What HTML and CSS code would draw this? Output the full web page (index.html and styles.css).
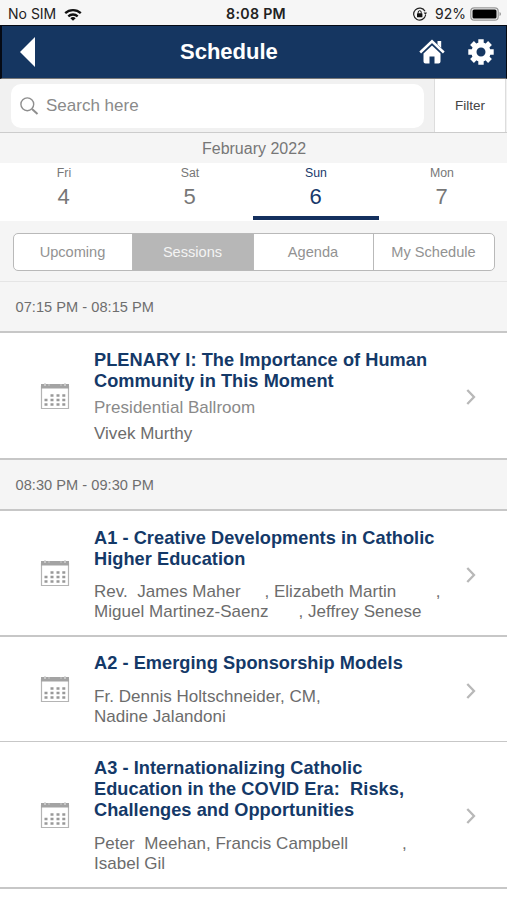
FILE: index.html
```html
<!DOCTYPE html>
<html lang="en">
<head>
<meta charset="utf-8">
<title>Schedule</title>
<link rel="stylesheet" href="styles.css">
</head>
<body>
<svg class="defs" aria-hidden="true">
  <symbol id="calendar" viewBox="0 0 30 28">
    <path d="M1.500 4v22.500h27V4" fill="#fff" stroke="#b4b4b4" stroke-width="1.200"/>
    <path d="M1 2h28v4.500H1z" fill="#a3a3a3"/>
    <path d="M5 1v3M9 2.500v1M21 2.500v1M25 1v3" stroke="#d5d5d5" stroke-width="1.500"/>
    <path d="M10.500 13.500h3M16.500 13.500h3M22.300 13.500h3M4.500 18h3M10.500 18h3M16.500 18h3M22.300 18h3M4.500 22.500h3M10.500 22.500h3M16.500 22.500h3M22.300 22.500h3" stroke="#999" stroke-width="2.700"/>
  </symbol>
  <symbol id="chevron" viewBox="0 0 10 16">
    <path d="M1.300 1l6.700 7-6.700 7" fill="none" stroke="#b8b8b8" stroke-width="2.300"/>
  </symbol>
</svg>

<div class="status">
  <div class="carrier">No SIM
    <svg width="18" height="13" viewBox="0 0 18 13" fill="none" stroke="#111" stroke-width="2.300"><path d="M1.200 5.200a11.300 11.300 0 0 1 15.600 0M4.300 8.300a7 7 0 0 1 9.400 0"/><path d="M6.300 10.200a4.300 4.300 0 0 1 5.400 0L9 12.800z" fill="#111" stroke="none"/></svg>
  </div>
  <div class="clock">8:08 PM</div>
  <div class="power">
    <svg width="14" height="14" viewBox="0 0 14 14"><path d="M12 4.300A6 6 0 1 0 12.600 8" fill="none" stroke="#222" stroke-width="1.200"/><path d="M10.600 5.500h3.400L12.500 8z" fill="#222"/><rect x="4" y="6.300" width="5.400" height="4" rx=".5" fill="#111"/><path d="M5.200 6.500V5.200a1.500 1.500 0 0 1 3 0v1.300" fill="none" stroke="#111"/></svg>
    <span class="percent">92%</span>
    <svg width="32" height="14" viewBox="0 0 32 14"><rect x=".8" y=".8" width="27.400" height="12.400" rx="3.500" fill="#f6f6f6" stroke="#999" stroke-width="1.200"/><rect x="2.500" y="2.500" width="24" height="9" rx="1.500"/><path d="M29.500 5v4q1.500-.5 1.500-2t-1.500-2" fill="#999"/></svg>
  </div>
</div>

<header class="bar">
  <svg class="back" width="15" height="30" viewBox="0 0 15 30"><path d="M15 0v30L0 15z" fill="#fff"/></svg>
  <h1>Schedule</h1>
  <div class="tools">
    <svg width="26" height="25" viewBox="0 0 26 25"><path d="M1.200 13.500L13 2.300l11.800 11.200" fill="none" stroke="#fff" stroke-width="2.500"/><path d="M18.500 2h3.700v7l-3.700-3.500z" fill="#fff"/><path d="M4.500 14.500L13 6.500l8.500 8v8q0 2-2 2h-4v-7h-5v7h-4q-2 0-2-2z" fill="#fff"/></svg>
    <svg width="26" height="26" viewBox="0 0 26 26" fill="none" stroke="#fff"><circle cx="13" cy="13" r="7.100" stroke-width="5.200"/><g stroke-width="5.400"><path d="M13 .3v4M13 21.700v4M.3 13h4M21.700 13h4M4 4l2.800 2.800M19.200 19.200L22 22M22 4l-2.800 2.800M6.800 19.200L4 22"/></g></svg>
  </div>
</header>

<div class="search">
  <div class="field">
    <svg width="19" height="18" viewBox="0 0 19 18" fill="none" stroke="#8e8e8e" stroke-width="1.400"><circle cx="7.300" cy="7.300" r="6.400"/><path d="M12 12l5.500 5" stroke-width="2"/></svg>
    <span>Search here</span>
  </div>
  <div class="filter">Filter</div>
</div>

<div class="month">February 2022</div>
<div class="days">
  <div class="day"><small>Fri</small><b>4</b></div>
  <div class="day"><small>Sat</small><b>5</b></div>
  <div class="day current"><small>Sun</small><b>6</b></div>
  <div class="day"><small>Mon</small><b>7</b></div>
</div>

<nav class="tabs">
  <div class="segments">
    <span>Upcoming</span><span class="on">Sessions</span><span>Agenda</span><span>My Schedule</span>
  </div>
</nav>

<main>
  <div class="time">07:15 PM - 08:15 PM</div>
  <article class="plenary">
    <svg class="cal"><use href="#calendar"/></svg>
    <div class="info">
      <h2>PLENARY I: The Importance of Human
Community in This Moment</h2>
      <p class="room">Presidential Ballroom</p>
      <p class="people">Vivek Murthy</p>
    </div>
    <svg class="chev"><use href="#chevron"/></svg>
  </article>
  <div class="time">08:30 PM - 09:30 PM</div>
  <article class="a1">
    <svg class="cal"><use href="#calendar"/></svg>
    <div class="info">
      <h2>A1 - Creative Developments in Catholic
Higher Education</h2>
      <p class="people">Rev.  James Maher     , Elizabeth Martin        &#8202;,
Miguel Martinez-Saenz      &#8202;, Jeffrey Senese</p>
    </div>
    <svg class="chev"><use href="#chevron"/></svg>
  </article>
  <article class="a2">
    <svg class="cal"><use href="#calendar"/></svg>
    <div class="info">
      <h2>A2 - Emerging Sponsorship Models</h2>
      <p class="people">Fr. Dennis Holtschneider, CM,
Nadine Jalandoni</p>
    </div>
    <svg class="chev"><use href="#chevron"/></svg>
  </article>
  <article class="a3">
    <svg class="cal"><use href="#calendar"/></svg>
    <div class="info">
      <h2>A3 - Internationalizing Catholic
Education in the COVID Era:  Risks,
Challenges and Opportunities</h2>
      <p class="people">Peter  Meehan, Francis Campbell           &#8202;,
Isabel Gil</p>
    </div>
    <svg class="chev"><use href="#chevron"/></svg>
  </article>
</main>
</body>
</html>
```
FILE: styles.css
```css
* { box-sizing: border-box; margin: 0; padding: 0; }
body {
  width: 507px;
  height: 900px;
  overflow: hidden;
  background: #fff;
  color: #777;
  font-family: "Liberation Sans", Arial, sans-serif;
}
svg { display: block; flex: none; }
.defs { display: none; }

.status {
  display: grid;
  grid-template-columns: 1fr auto 1fr;
  align-items: center;
  height: 25px;
  padding: 3px 5px 0 8px;
  background: #f6f6f6;
  color: #222;
  font: 14px/20px Inter, sans-serif;
}
.carrier, .power { display: flex; align-items: center; gap: 8px; }
.power { justify-content: flex-end; gap: 4px; }
.percent { margin-left: 4px; }
.clock { padding-left: 2px; font-weight: 600; font-size: 14.2px; letter-spacing: .3px; }

.bar {
  display: grid;
  grid-template-columns: 160px auto 1fr;
  align-items: center;
  height: 54px;
  padding: 0 12px 0 18px;
  background: #153661;
  border: solid #050a14;
  border-width: 1px 1px 1px 2px;
  border-bottom-color: #777;
}
.bar h1 { color: #fff; font-size: 22px; line-height: 26px; }
.tools { display: flex; justify-content: flex-end; gap: 23px; }

.search {
  display: flex;
  height: 54px;
  background: #f1f1f1;
  border-bottom: 1px solid #ccc;
}
.field {
  display: flex;
  align-items: center;
  gap: 7px;
  width: 413px;
  height: 44px;
  margin: 5px 0 0 11px;
  padding-left: 9px;
  background: #fff;
  border-radius: 10px;
  color: #8a8a8a;
  font-size: 17px;
}
.filter {
  width: 72px;
  margin-left: 10px;
  border: solid #ddd;
  border-width: 0 1px;
  background: #fff;
  color: #444;
  font-size: 13.5px;
  line-height: 53px;
  text-align: center;
}

.month { height: 30px; padding-left: 1px; background: #f5f5f5; font-size: 16px; line-height: 31px; text-align: center; }
.days { display: grid; grid-template-columns: repeat(4, 126px); height: 58px; padding: 0 0 1px 1px; }
.day { display: flex; flex-direction: column; align-items: center; padding-top: 2px; border-bottom: 4px solid transparent; }
.day small { font-size: 12.3px; line-height: 16px; }
.day b { padding-right: 1px; font-size: 22px; font-weight: 400; line-height: 32px; }
.current { border-color: #14305e; color: #17396b; }

.tabs { height: 61px; padding: 12px 12px 0 13px; background: #f5f5f5; border-bottom: 1px solid #e5e5e5; }
.segments {
  display: grid;
  grid-template-columns: 118px 121px 120px 1fr;
  height: 38px;
  border: 1px solid #b9b9b9;
  border-radius: 5px;
  background: #fff;
  color: #929292;
  font-size: 14.6px;
  line-height: 36px;
  text-align: center;
}
.segments span { padding-right: 1px; }
.segments span + span { border-left: 1px solid #b9b9b9; }
.segments .on { background: #b7b7b7; color: #f4f4f4; }

.time {
  height: 51px;
  padding-left: 15.5px;
  background: #f5f5f5;
  border-bottom: 2px solid #c7c7c7;
  color: #6e6e6e;
  font-size: 14.6px;
  line-height: 51px;
  letter-spacing: .03px;
}
article {
  display: grid;
  grid-template-columns: 54px 1fr 10px;
  align-items: center;
  padding: 0 31px 0 40px;
  border-bottom: 2px solid #c7c7c7;
}
.cal { width: 30px; height: 28px; }
.chev { width: 10px; height: 16px; margin-top: 3px; }
.info { align-self: start; padding-top: 17px; }
h2, p { white-space: pre; }
h2 { color: #143968; font-size: 18.2px; line-height: 21px; letter-spacing: .05px; }
p { font-size: 17px; line-height: 20px; letter-spacing: .03px; }
.room { margin-top: 6px; color: #8a8a8a; }
.people { margin-top: 12px; color: #6c6c6c; line-height: 19.5px; }
.plenary { height: 127px; }
.plenary .people { margin-top: 6px; }
.a1 { height: 126px; }
.a2 { height: 105px; border-bottom-width: 1px; }
.a2 .info, .a3 .info { padding-top: 16px; }
.a2 .people, .a3 .people { margin-top: 13px; }
.a3 { height: 147px; }
```
